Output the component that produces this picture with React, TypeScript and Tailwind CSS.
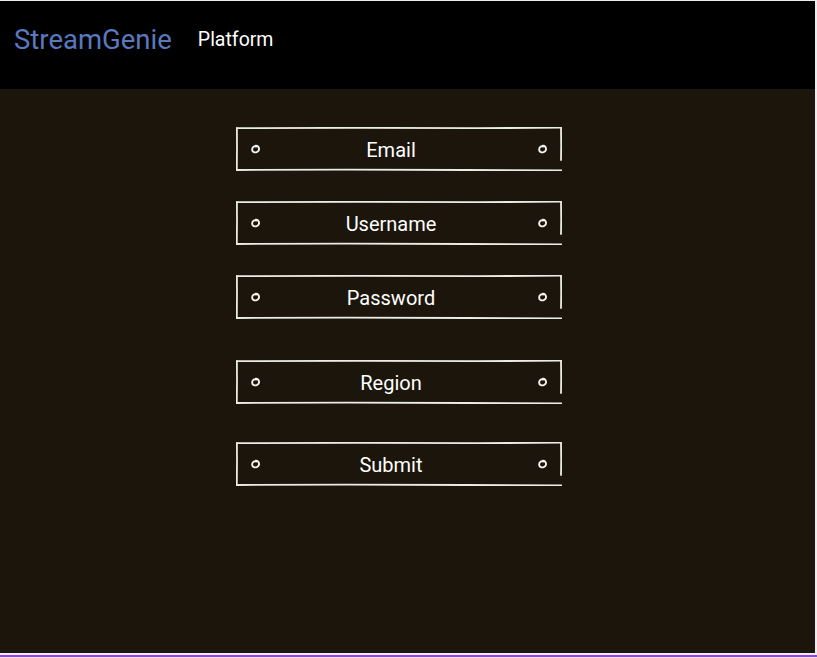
const FIELDS = [
  { label: "Email", mt: "mt-[38px]" },
  { label: "Username", mt: "mt-[30px]" },
  { label: "Password", mt: "mt-[30px]" },
  { label: "Region", mt: "mt-[41px]" },
  { label: "Submit", mt: "mt-[38px]" },
];

function Dot() {
  return (
    <svg width="11" height="11" viewBox="0 0 11 11" className="shrink-0">
      <path d="M5.6 1.8 C8 1.6 9.4 3.6 9 5.8 C8.5 8 5.4 8.9 3.4 7.9 C1.7 6.9 1.7 4 3.5 2.7 C4.2 2.2 5.1 2.1 6.2 2.5" fill="none" stroke="#f4f3ee" strokeWidth="1.9" strokeLinecap="round" />
    </svg>
  );
}

function SketchBox({ label, mt }: { label: string; mt: string }) {
  return (
    <div className={`relative w-[326px] h-[44px] ${mt} flex items-center justify-between pl-[14px] pr-[14px]`}>
      <svg className="absolute inset-0 pointer-events-none" width="326" height="44" viewBox="0 0 326 44">
        <g fill="none" stroke="#ecebe4" strokeWidth="1.8" strokeLinecap="round">
          <path d="M1 1.2 L120 0.8 L240 1.2 L325 0.7" />
          <path d="M325 0.7 L325.2 18 L325 33" />
          <path d="M0.9 1 L1 20 L0.8 43" />
          <path d="M0.8 43 L110 42.6 L230 43 L325.5 43.4" />
        </g>
      </svg>
      <Dot />
      <span className="flex-1 text-center pr-[15px] pt-[1px] text-[20px] text-white">{label}</span>
      <Dot />
    </div>
  );
}

export default function App() {
  return (
    <div className="w-[817px] h-[658px] bg-[#ececef] font-['Roboto',sans-serif] overflow-hidden">
      <div className="w-[815px] h-[653px] pt-px flex flex-col">
        <header className="h-[88px] bg-black flex items-start px-[14px] pt-[22px] gap-[26px] shrink-0">
          <span className="text-[27.5px] leading-[34px] text-[#5a78be]">StreamGenie</span>
          <span className="text-[19.5px] leading-[34px] text-white">Platform</span>
        </header>
        <main className="flex-1 bg-[#1b150b] flex flex-col items-center pr-[18px]">
          {FIELDS.map((f) => (
            <SketchBox key={f.label} label={f.label} mt={f.mt} />
          ))}
        </main>
      </div>
      <div className="mt-[2px] h-[2px] bg-[#9a3cff]" />
    </div>
  );
}
